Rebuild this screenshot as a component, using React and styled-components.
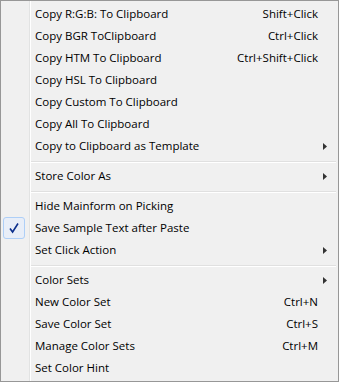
import React from "react";
import styled, { createGlobalStyle } from "styled-components";

const Global = createGlobalStyle`
  html, body { margin: 0; padding: 0; background: #f0f0f0; }
  body { font-family: "Open Sans", "Segoe UI", sans-serif; }
`;

const Menu = styled.div`
  box-sizing: border-box;
  width: 339px;
  height: 382px;
  border: 1px solid #979797;
  padding: 2px;
  background-color: #f0f0f0;
  background-image: linear-gradient(
    to right,
    transparent 28px,
    #e2e3e3 28px,
    #e2e3e3 29px,
    #ffffff 29px,
    #ffffff 30px,
    transparent 30px
  );
  display: flex;
  flex-direction: column;
  font-family: "Open Sans", sans-serif;
  font-size: 11.5px;
  color: #000;
`;

const Item = styled.div`
  height: 22px;
  display: grid;
  grid-template-columns: 32px 1fr auto 18px;
  align-items: center;
  white-space: nowrap;
`;

const IconCell = styled.div`
  width: 22px;
  height: 22px;
  box-sizing: border-box;
  display: flex;
  align-items: center;
  justify-content: center;
  border-radius: 3px;
  ${(p) =>
    p.$checked &&
    `
    border: 1px solid #aecff7;
    background: #e8eef8;
  `}
`;

const Label = styled.span`
  line-height: 22px;
`;

const Shortcut = styled.span`
  line-height: 22px;
  text-align: right;
`;

const ArrowCell = styled.div`
  display: flex;
  align-items: center;
  padding-left: 5px;
`;

const Separator = styled.div`
  height: 8px;
  margin-left: 28px;
  &::before {
    content: "";
    display: block;
    margin-top: 4px;
    height: 1px;
    background: #e0e0e0;
    border-bottom: 1px solid #ffffff;
  }
`;

const Arrow = () => (
  <svg width="4" height="7" viewBox="0 0 4 7">
    <path d="M0 0 L4 3.5 L0 7 Z" fill="#333" />
  </svg>
);

const Check = () => (
  <svg width="12" height="12" viewBox="0 0 12 12">
    <path
      d="M2 6.5 L4.6 10 L10 1.5"
      fill="none"
      stroke="#0c2f8c"
      strokeWidth="1.6"
    />
  </svg>
);

const groups = [
  [
    { label: "Copy R:G:B: To Clipboard", shortcut: "Shift+Click" },
    { label: "Copy BGR ToClipboard", shortcut: "Ctrl+Click" },
    { label: "Copy HTM To Clipboard", shortcut: "Ctrl+Shift+Click" },
    { label: "Copy HSL To Clipboard" },
    { label: "Copy Custom To Clipboard" },
    { label: "Copy All To Clipboard" },
    { label: "Copy to Clipboard as Template", sub: true },
  ],
  [{ label: "Store Color As", sub: true }],
  [
    { label: "Hide Mainform on Picking" },
    { label: "Save Sample Text after Paste", checked: true },
    { label: "Set Click Action", sub: true },
  ],
  [
    { label: "Color Sets", sub: true },
    { label: "New Color Set", shortcut: "Ctrl+N" },
    { label: "Save Color Set", shortcut: "Ctrl+S" },
    { label: "Manage Color Sets", shortcut: "Ctrl+M" },
    { label: "Set Color Hint" },
  ],
];

export default function App() {
  return (
    <>
      <Global />
      <Menu>
        {groups.map((g, gi) => (
          <React.Fragment key={gi}>
            {gi > 0 && <Separator />}
            {g.map((it) => (
              <Item key={it.label}>
                <IconCell $checked={it.checked}>{it.checked && <Check />}</IconCell>
                <Label>{it.label}</Label>
                <Shortcut>{it.shortcut || ""}</Shortcut>
                <ArrowCell>{it.sub && <Arrow />}</ArrowCell>
              </Item>
            ))}
          </React.Fragment>
        ))}
      </Menu>
    </>
  );
}
